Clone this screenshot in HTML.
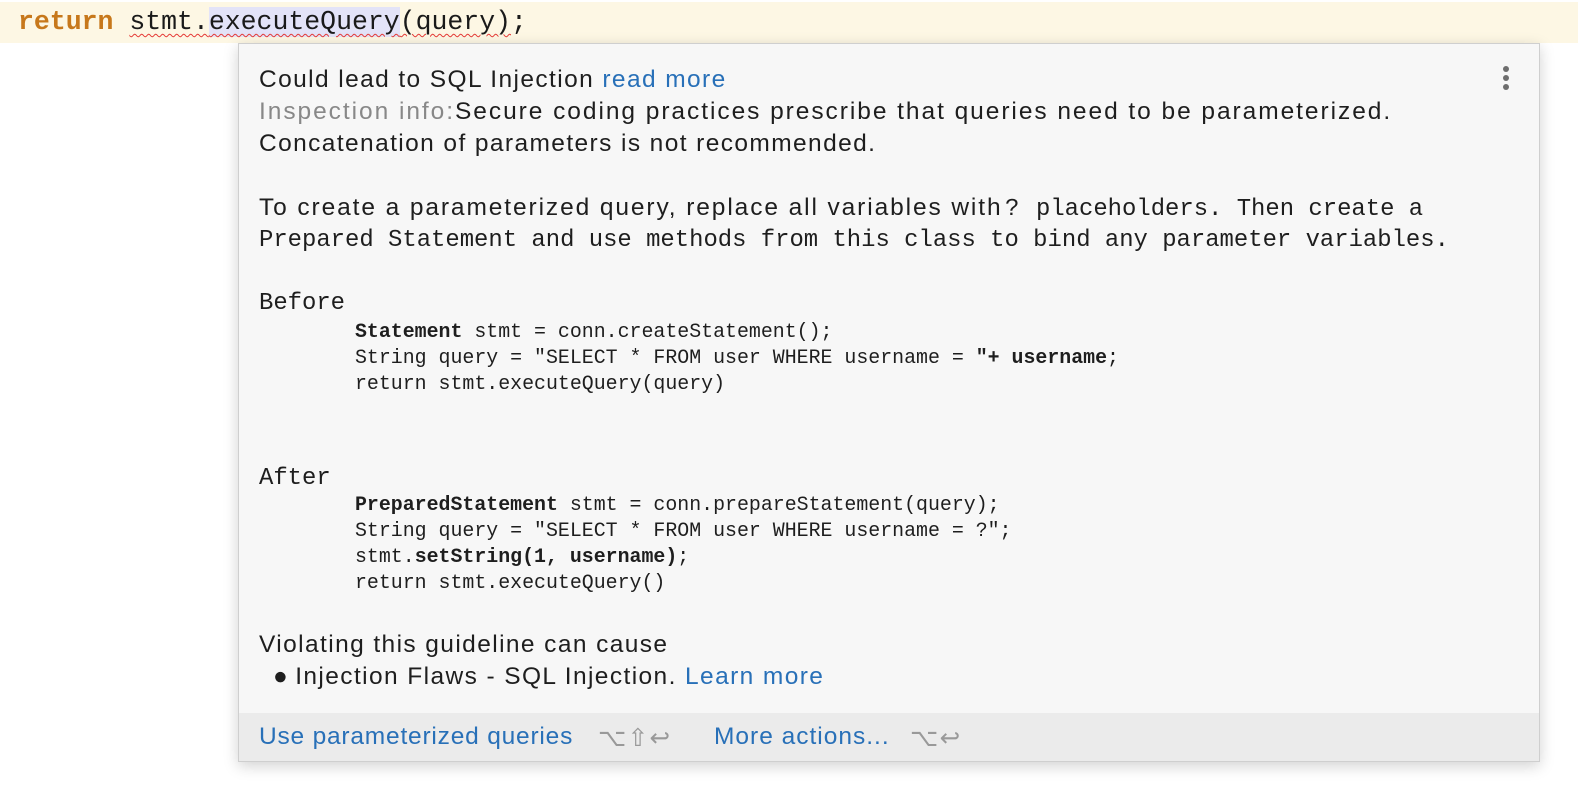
<!DOCTYPE html>
<html><head><meta charset="utf-8"><style>
body{margin:0;width:1578px;height:786px;background:#fff;position:relative;overflow:hidden;font-family:"Liberation Sans",sans-serif}
.line{position:absolute;left:0;top:2px;width:1578px;height:41px;background:#fdf7e4}
.code{position:absolute;left:18px;top:5px;font:26.5px/34px "Liberation Mono",monospace;color:#1a1a1a;white-space:pre}
.kw{color:#c7781b;font-weight:bold}
.hl{background:#e3e3f8}
.sq{text-decoration:underline wavy #e53935;text-decoration-thickness:1px;text-underline-offset:4px}
.pop{position:absolute;left:238px;top:43px;width:1300px;height:717px;background:#f7f7f7;border:1px solid #cfcfcf;box-shadow:0 4px 14px rgba(0,0,0,.18)}
.t{position:absolute;left:20px;font-size:24.5px;letter-spacing:1.4px;color:#1e1e1e;white-space:nowrap}
.a{color:#2870b8}
.g{color:#888}
.m{position:absolute;left:20px;font:23.9px "Liberation Mono",monospace;letter-spacing:0;color:#1e1e1e;white-space:pre}
.c{position:absolute;left:116px;font:19.9px "Liberation Mono",monospace;color:#1e1e1e;white-space:pre}
.foot{position:absolute;left:0;bottom:0;width:100%;height:48px;background:#ebebeb}
.dots{position:absolute;left:1264px;top:22px}
.dots i{display:block;width:6px;height:6px;border-radius:3px;background:#6e6e6e;margin-bottom:3px}
</style></head><body>
<div class="line"></div>
<div class="code"><span class="kw">return</span> <span class="sq">stmt.<span class="hl">executeQuery</span>(query)</span>;</div>
<div class="pop">
<div class="dots"><i></i><i></i><i></i></div>
<div class="t" style="top:22px">Could lead to SQL Injection <span class="a">read more</span></div>
<div class="t" style="top:54px;letter-spacing:1.95px"><span class="g">Inspection info:</span>Secure coding practices prescribe that queries need to be parameterized.</div>
<div class="t" style="top:86px">Concatenation of parameters is not recommended.</div>
<div class="t" style="top:150px;letter-spacing:1.9px">To create a parameterized query, replace all variables with</div>
<div class="m" style="top:152px;left:766px">?</div>
<div class="m" style="top:152px;left:797px">placeholders. Then create a</div>
<div class="m" style="top:183px">Prepared Statement and use methods from this class to bind any parameter variables.</div>
<div class="m" style="top:246px">Before</div>
<div class="c" style="top:276px"><b>Statement</b> stmt = conn.createStatement();</div>
<div class="c" style="top:302px">String query = "SELECT * FROM user WHERE username = <b>"+ username</b>;</div>
<div class="c" style="top:328px">return stmt.executeQuery(query)</div>
<div class="m" style="top:421px">After</div>
<div class="c" style="top:449px"><b>PreparedStatement</b> stmt = conn.prepareStatement(query);</div>
<div class="c" style="top:475px">String query = "SELECT * FROM user WHERE username = ?";</div>
<div class="c" style="top:501px">stmt.<b>setString(1, username)</b>;</div>
<div class="c" style="top:527px">return stmt.executeQuery()</div>
<div class="t" style="top:587px">Violating this guideline can cause</div>
<div class="t" style="top:619px;left:34px">●<span style="margin-left:6px">Injection Flaws - SQL Injection.</span> <span class="a">Learn more</span></div>
<div class="foot">
<div class="t a" style="top:10px;letter-spacing:0.8px">Use parameterized queries</div>
<div class="t g" style="top:10px;left:359px;color:#999">⌥⇧↩</div>
<div class="t a" style="top:10px;left:475px;letter-spacing:1px">More actions...</div>
<div class="t g" style="top:10px;left:671px;color:#999">⌥↩</div>
</div>
</div>
</body></html>
